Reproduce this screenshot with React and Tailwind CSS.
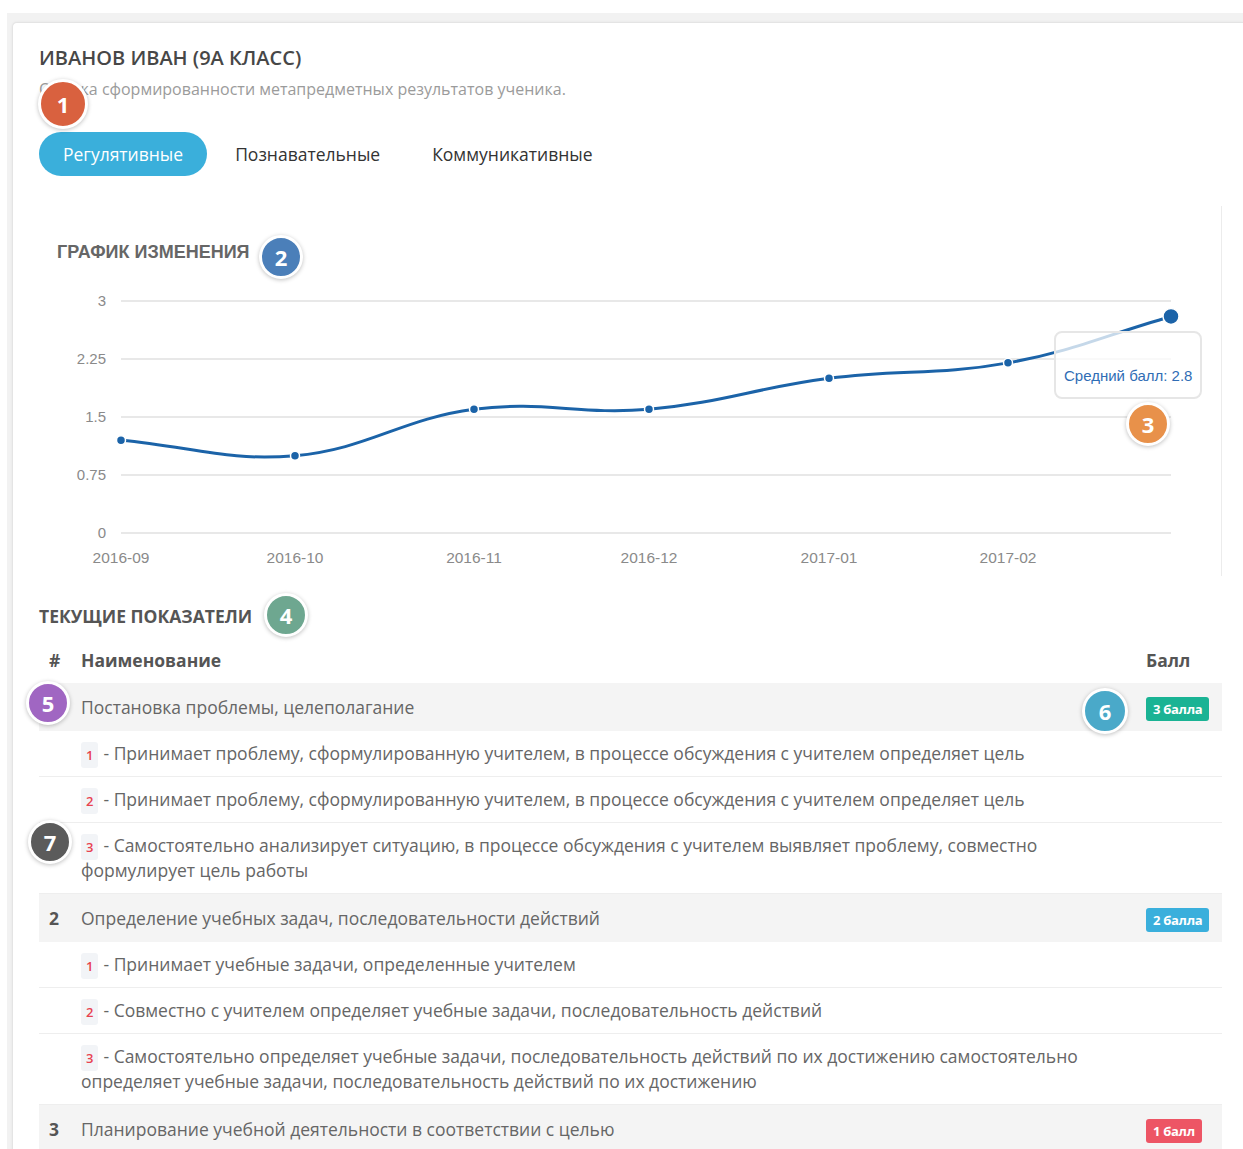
import React from "react";

const FONT = { fontFamily: '"Open Sans", "Noto Sans", sans-serif' };
const CHART_FONT = '"Liberation Sans", Arial, sans-serif';

// chart geometry (svg coordinates)
const X0 = 82;
const X1 = 1132;
const Y_ZERO = 247;
const UNIT = 77.33;
const months = ["2016-09", "2016-10", "2016-11", "2016-12", "2017-01", "2017-02", ""];
const xs = [82, 256, 435, 610, 790, 969, 1132];
const values = [1.2, 1.0, 1.6, 1.6, 2.0, 2.2, 2.8];
const ticks = [3, 2.25, 1.5, 0.75, 0];

const yOf = (v) => Y_ZERO - v * UNIT;

// cardinal spline, same idea as Chart.js tension 0.4
function buildPath(pts, t = 0.4) {
  const cps = pts.map((cur, i) => {
    const prev = pts[i - 1] || cur;
    const next = pts[i + 1] || cur;
    const d01 = Math.hypot(cur.x - prev.x, cur.y - prev.y);
    const d12 = Math.hypot(next.x - cur.x, next.y - cur.y);
    const sum = d01 + d12 || 1;
    const fa = (t * d01) / sum;
    const fb = (t * d12) / sum;
    return {
      inX: cur.x - fa * (next.x - prev.x),
      inY: cur.y - fa * (next.y - prev.y),
      outX: cur.x + fb * (next.x - prev.x),
      outY: cur.y + fb * (next.y - prev.y),
    };
  });
  let d = `M${pts[0].x},${pts[0].y}`;
  for (let i = 1; i < pts.length; i++) {
    d += ` C${cps[i - 1].outX},${cps[i - 1].outY} ${cps[i].inX},${cps[i].inY} ${pts[i].x},${pts[i].y}`;
  }
  return d;
}

function Chart() {
  const pts = xs.map((x, i) => ({ x, y: yOf(values[i]) }));
  const last = pts[pts.length - 1];
  return (
    <svg width="1183" height="290" viewBox="0 0 1183 290" className="block">
      {ticks.map((t) => (
        <g key={t}>
          <line x1={X0} x2={X1} y1={yOf(t)} y2={yOf(t)} stroke="#e8e8e8" strokeWidth="2" />
          <text x="67" y={yOf(t) + 5} textAnchor="end" fontSize="15" fill="#8a8a8a" fontFamily={CHART_FONT}>
            {t}
          </text>
        </g>
      ))}
      {months.map((m, i) =>
        m ? (
          <text key={m} x={xs[i]} y="277" textAnchor="middle" fontSize="15.5" fill="#8a8a8a" fontFamily={CHART_FONT}>
            {m}
          </text>
        ) : null
      )}
      <path d={buildPath(pts)} fill="none" stroke="#1b63a8" strokeWidth="3" strokeLinecap="round" />
      {pts.slice(0, -1).map((p, i) => (
        <circle key={i} cx={p.x} cy={p.y} r="4.5" fill="#1b63a8" stroke="#fff" strokeWidth="1.5" />
      ))}
      <circle cx={last.x} cy={last.y} r="8" fill="#1b63a8" stroke="#fff" strokeWidth="1.5" />
    </svg>
  );
}

function Marker({ n, className }) {
  return (
    <div
      className={`absolute flex items-center justify-center rounded-full border-[3px] border-white text-white text-[22px] font-bold shadow-[0_1px_4px_rgba(0,0,0,0.25)] ${className}`}
    >
      {n}
    </div>
  );
}

const groups = [
  {
    num: "1",
    title: "Постановка проблемы, целеполагание",
    score: "3 балла",
    color: "bg-[#1ab394]",
    items: [
      "Принимает проблему, сформулированную учителем, в процессе обсуждения с учителем определяет цель",
      "Принимает проблему, сформулированную учителем, в процессе обсуждения с учителем определяет цель",
      "Самостоятельно анализирует ситуацию, в процессе обсуждения с учителем выявляет проблему, совместно формулирует цель работы",
    ],
  },
  {
    num: "2",
    title: "Определение учебных задач, последовательности действий",
    score: "2 балла",
    color: "bg-[#3aafdc]",
    items: [
      "Принимает учебные задачи, определенные учителем",
      "Совместно с учителем определяет учебные задачи, последовательность действий",
      "Самостоятельно определяет учебные задачи, последовательность действий по их достижению самостоятельно определяет учебные задачи, последовательность действий по их достижению",
    ],
  },
  {
    num: "3",
    title: "Планирование учебной деятельности в соответствии с целью",
    score: "1 балл",
    color: "bg-[#ed5565]",
    items: [],
  },
];

function ScoreTable() {
  return (
    <div className="w-[1183px] text-[17.5px] text-[#666]">
      <div className="flex h-[46px] items-center font-bold text-[#555]">
        <div className="w-[42px] pl-[10px]">#</div>
        <div className="flex-1">Наименование</div>
        <div className="w-[76px]">Балл</div>
      </div>
      {groups.map((g) => (
        <div key={g.num}>
          <div className="flex h-[48px] items-center bg-[#f4f4f4] leading-[26px]">
            <div className="w-[42px] pl-[10px] font-bold text-[#555]">{g.num}</div>
            <div className="flex-1">{g.title}</div>
            <div className="w-[76px]">
              <span className={`inline-block rounded-[3px] px-[7px] text-[13px] font-bold leading-[24px] tracking-[-0.3px] text-white ${g.color}`}>
                {g.score}
              </span>
            </div>
          </div>
          {g.items.map((text, i) => (
            <div key={i} className="flex border-b border-[#eeeeee] py-[10px] leading-[25px]">
              <div className="w-[42px] shrink-0" />
              <div className="flex-1 pr-[118px]">
                <span className="mr-[5px] rounded-[3px] bg-[#f2f4f7] px-[5px] py-[4px] text-[13px] font-semibold leading-[1] text-[#e8424f]">
                  {i + 1}
                </span>
                - {text}
              </div>
            </div>
          ))}
        </div>
      ))}
    </div>
  );
}

export default function App() {
  const tabs = ["Регулятивные", "Познавательные", "Коммуникативные"];
  return (
    <div className="relative min-h-[1149px] overflow-hidden bg-white pl-[7px] pt-[13px]" style={FONT}>
      <div className="bg-[#f2f2f2] pl-[5px] pt-[9px]">
        <div className="rounded-tl-[5px] border-l border-t border-[#e4e4e4] bg-white pb-[40px] pl-[26px] pt-[22px] shadow-[0_0_3px_rgba(0,0,0,0.06)]">
          <h1 className="text-[20px] font-semibold leading-[26px] text-[#474747]">ИВАНОВ ИВАН (9А КЛАСС)</h1>
          <p className="mt-[7px] text-[16px] leading-[22px] text-[#9b9b9b]">
            Оценка сформированности метапредметных результатов ученика.
          </p>

          <div className="mt-[32px] flex gap-[4px]">
            {tabs.map((t, i) => (
              <div
                key={t}
                className={
                  i === 0
                    ? "flex h-[44px] items-center rounded-full bg-[#3aafdb] px-[24px] text-[17.5px] text-white"
                    : "flex h-[44px] items-center px-[24px] text-[17.5px] text-[#333]"
                }
              >
                {t}
              </div>
            ))}
          </div>

          {/* chart panel */}
          <div className="relative mt-[30px] w-[1183px] border-r border-[#ececec] pt-[35px]">
            <div className="pl-[18px] text-[18px] font-bold leading-[22px] text-[#666]" style={{ fontFamily: CHART_FONT }}>
              ГРАФИК ИЗМЕНЕНИЯ
            </div>
            <div className="mt-[23px]">
              <Chart />
            </div>
            <div className="absolute left-[1015px] top-[125px] flex h-[68px] w-[148px] flex-col justify-end rounded-[8px] border-2 border-[#e6e6e6] bg-white/75 pb-[10px] pl-[8px] text-[15px] text-[#2f6db5]" style={{ fontFamily: CHART_FONT }}>
              Средний балл: 2.8
            </div>
          </div>

          <div className="mt-[28px] text-[17.5px] font-bold leading-[24px] text-[#555]">ТЕКУЩИЕ ПОКАЗАТЕЛИ</div>
          <div className="mt-[9px]">
            <ScoreTable />
          </div>
        </div>
      </div>

      <Marker n="1" className="left-[38px] top-[79px] h-[50px] w-[50px] bg-[#d9613f]" />
      <Marker n="2" className="left-[259px] top-[235px] h-[44px] w-[44px] bg-[#4b7fb9]" />
      <Marker n="3" className="left-[1126px] top-[402px] h-[44px] w-[44px] bg-[#e8914a]" />
      <Marker n="4" className="left-[264px] top-[593px] h-[44px] w-[44px] bg-[#6ea790]" />
      <Marker n="5" className="left-[26px] top-[681px] h-[44px] w-[44px] bg-[#a066c2]" />
      <Marker n="6" className="left-[1082px] top-[688px] h-[46px] w-[46px] bg-[#4aa9c9]" />
      <Marker n="7" className="left-[28px] top-[820px] h-[44px] w-[44px] bg-[#5b5b5b]" />
    </div>
  );
}
